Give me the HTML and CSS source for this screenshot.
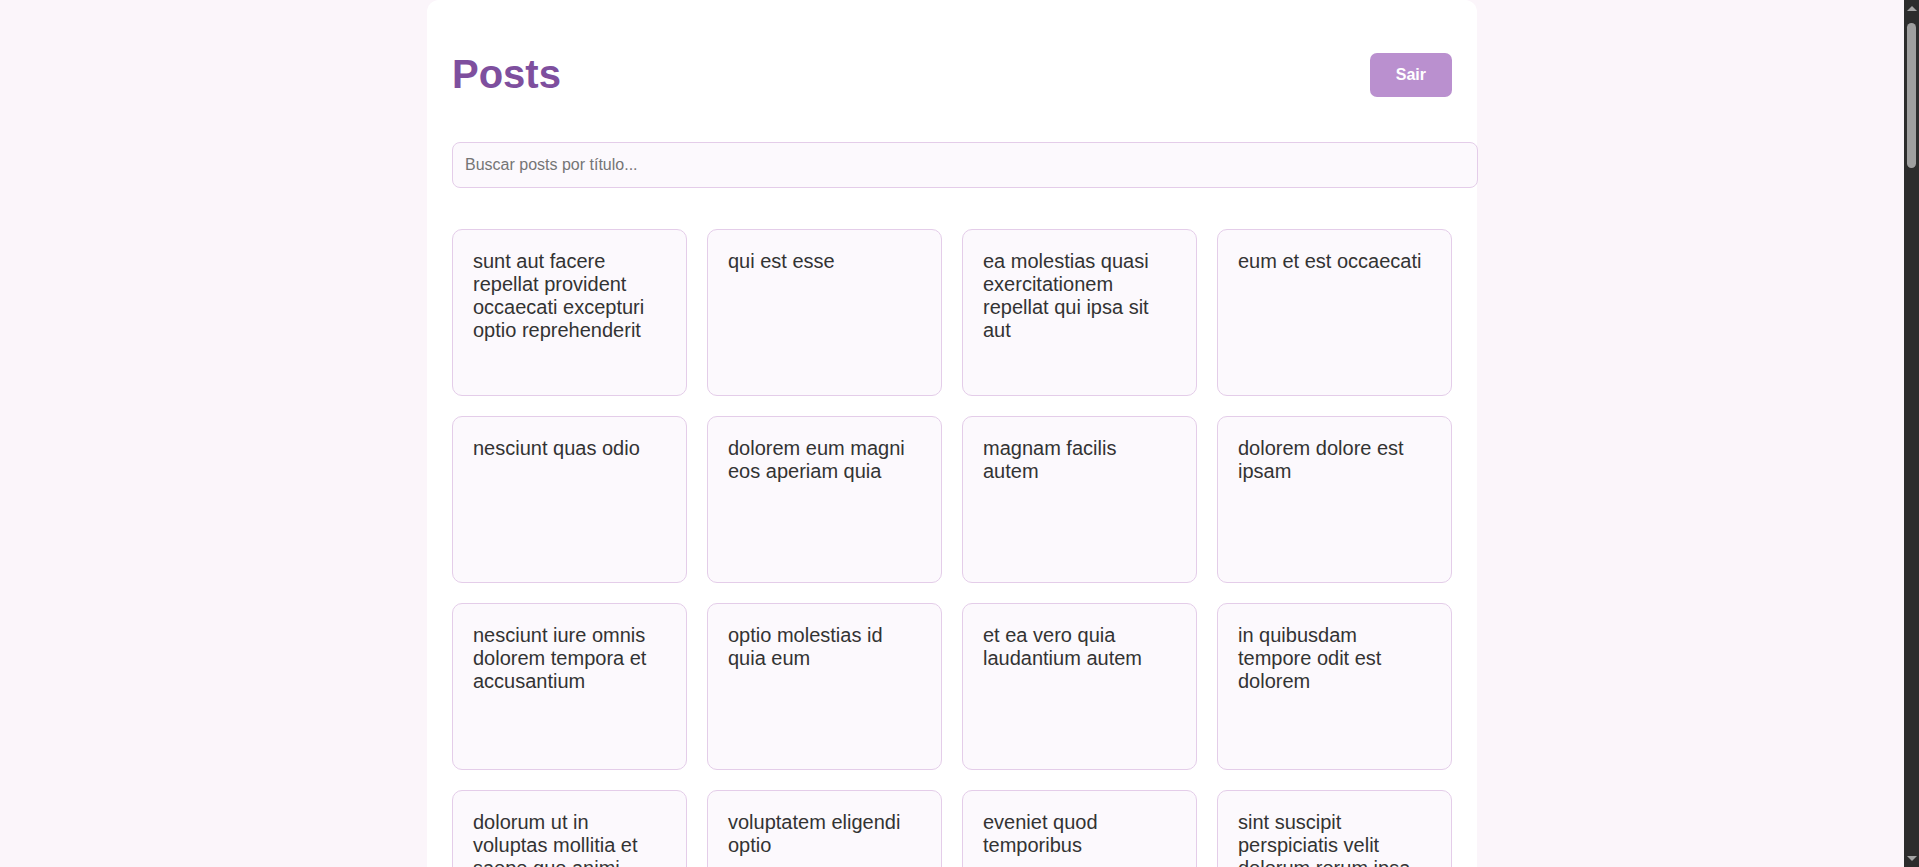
FILE: index.html
```html
<!DOCTYPE html>
<html lang="pt-BR">
<head>
<meta charset="utf-8">
<title>Posts</title>
<link rel="stylesheet" href="styles.css">
</head>
<body>
<main class="container">
  <header class="header">
    <h1 class="title">Posts</h1>
    <button class="logout" type="button">Sair</button>
  </header>
  <input class="search" type="text" placeholder="Buscar posts por título...">
  <section class="grid">
    <article class="card"><h3 class="card-title">sunt aut facere repellat provident occaecati excepturi optio reprehenderit</h3></article>
    <article class="card"><h3 class="card-title">qui est esse</h3></article>
    <article class="card"><h3 class="card-title">ea molestias quasi exercitationem repellat qui ipsa sit aut</h3></article>
    <article class="card"><h3 class="card-title">eum et est occaecati</h3></article>
    <article class="card"><h3 class="card-title">nesciunt quas odio</h3></article>
    <article class="card"><h3 class="card-title">dolorem eum magni eos aperiam quia</h3></article>
    <article class="card"><h3 class="card-title">magnam facilis autem</h3></article>
    <article class="card"><h3 class="card-title">dolorem dolore est ipsam</h3></article>
    <article class="card"><h3 class="card-title">nesciunt iure omnis dolorem tempora et accusantium</h3></article>
    <article class="card"><h3 class="card-title">optio molestias id quia eum</h3></article>
    <article class="card"><h3 class="card-title">et ea vero quia laudantium autem</h3></article>
    <article class="card"><h3 class="card-title">in quibusdam tempore odit est dolorem</h3></article>
    <article class="card"><h3 class="card-title">dolorum ut in voluptas mollitia et saepe quo animi</h3></article>
    <article class="card"><h3 class="card-title">voluptatem eligendi optio</h3></article>
    <article class="card"><h3 class="card-title">eveniet quod temporibus</h3></article>
    <article class="card"><h3 class="card-title">sint suscipit perspiciatis velit dolorum rerum ipsa laboriosam odio</h3></article>
    <article class="card"><h3 class="card-title">fugit voluptas sed molestias voluptatem provident</h3></article>
    <article class="card"><h3 class="card-title">voluptate et itaque vero tempora molestiae</h3></article>
    <article class="card"><h3 class="card-title">adipisci placeat illum aut reiciendis qui</h3></article>
    <article class="card"><h3 class="card-title">doloribus ad provident suscipit at</h3></article>
    <article class="card"><h3 class="card-title">asperiores ea ipsam voluptatibus modi minima quia sint</h3></article>
    <article class="card"><h3 class="card-title">dolor sint quo a velit explicabo quia nam</h3></article>
    <article class="card"><h3 class="card-title">maxime id vitae nihil numquam</h3></article>
    <article class="card"><h3 class="card-title">autem hic labore sunt dolores incidunt</h3></article>
    <article class="card"><h3 class="card-title">rem alias distinctio quo quis</h3></article>
    <article class="card"><h3 class="card-title">est et quae odit qui non</h3></article>
    <article class="card"><h3 class="card-title">quasi id et eos tenetur aut quo autem</h3></article>
    <article class="card"><h3 class="card-title">delectus ullam et corporis nulla voluptas sequi</h3></article>
    <article class="card"><h3 class="card-title">iusto eius quod necessitatibus culpa ea</h3></article>
    <article class="card"><h3 class="card-title">a quo magni similique perferendis</h3></article>
    <article class="card"><h3 class="card-title">ullam ut quidem id aut vel consequuntur</h3></article>
    <article class="card"><h3 class="card-title">doloremque illum aliquid sunt</h3></article>
    <article class="card"><h3 class="card-title">qui explicabo molestiae dolorem</h3></article>
    <article class="card"><h3 class="card-title">magnam ut rerum iure</h3></article>
    <article class="card"><h3 class="card-title">id nihil consequatur molestias animi provident</h3></article>
    <article class="card"><h3 class="card-title">fuga nam accusamus voluptas reiciendis itaque</h3></article>
    <article class="card"><h3 class="card-title">provident vel ut sit ratione est</h3></article>
    <article class="card"><h3 class="card-title">explicabo et eos deleniti nostrum ab id repellendus</h3></article>
    <article class="card"><h3 class="card-title">eos dolorem iste accusantium est eaque quam</h3></article>
    <article class="card"><h3 class="card-title">enim quo cumque</h3></article>
    <article class="card"><h3 class="card-title">non est facere</h3></article>
    <article class="card"><h3 class="card-title">commodi ullam sint et excepturi error explicabo praesentium voluptas</h3></article>
    <article class="card"><h3 class="card-title">eligendi iste nostrum consequuntur adipisci praesentium sit beatae perferendis</h3></article>
    <article class="card"><h3 class="card-title">optio dolor molestias sit</h3></article>
    <article class="card"><h3 class="card-title">ut numquam possimus omnis eius suscipit laudantium iure</h3></article>
    <article class="card"><h3 class="card-title">aut quo modi neque nostrum ducimus</h3></article>
    <article class="card"><h3 class="card-title">quibusdam cumque rem aut deserunt</h3></article>
    <article class="card"><h3 class="card-title">ut voluptatem illum ea doloribus itaque eos</h3></article>
    <article class="card"><h3 class="card-title">laborum non sunt aut ut assumenda perspiciatis voluptas</h3></article>
    <article class="card"><h3 class="card-title">repellendus qui recusandae incidunt voluptates tenetur qui omnis exercitationem</h3></article>
    <article class="card"><h3 class="card-title">soluta aliquam aperiam consequatur illo quis voluptas</h3></article>
    <article class="card"><h3 class="card-title">qui enim et consequuntur quia animi quis voluptate quibusdam</h3></article>
    <article class="card"><h3 class="card-title">ut quo aut ducimus alias</h3></article>
    <article class="card"><h3 class="card-title">sit asperiores ipsam eveniet odio non quia</h3></article>
    <article class="card"><h3 class="card-title">sit vel voluptatem et non libero</h3></article>
    <article class="card"><h3 class="card-title">qui et at rerum necessitatibus</h3></article>
    <article class="card"><h3 class="card-title">sed ab est est</h3></article>
    <article class="card"><h3 class="card-title">voluptatum itaque dolores nisi et quasi</h3></article>
    <article class="card"><h3 class="card-title">qui commodi dolor at maiores et quis id accusantium</h3></article>
    <article class="card"><h3 class="card-title">consequatur placeat omnis quisquam quia reprehenderit fugit veritatis facere</h3></article>
    <article class="card"><h3 class="card-title">voluptatem doloribus consectetur est ut ducimus</h3></article>
    <article class="card"><h3 class="card-title">beatae enim quia vel</h3></article>
    <article class="card"><h3 class="card-title">voluptas blanditiis repellendus animi ducimus error sapiente et suscipit</h3></article>
    <article class="card"><h3 class="card-title">et fugit quas eum in in aperiam quod</h3></article>
    <article class="card"><h3 class="card-title">consequatur id enim sunt et et</h3></article>
    <article class="card"><h3 class="card-title">repudiandae ea animi iusto</h3></article>
    <article class="card"><h3 class="card-title">aliquid eos sed fuga est maxime repellendus</h3></article>
    <article class="card"><h3 class="card-title">odio quis facere architecto reiciendis optio</h3></article>
    <article class="card"><h3 class="card-title">fugiat quod pariatur odit minima</h3></article>
    <article class="card"><h3 class="card-title">voluptatem laborum magni</h3></article>
    <article class="card"><h3 class="card-title">et iusto veniam et illum aut fuga</h3></article>
    <article class="card"><h3 class="card-title">sint hic doloribus consequatur eos non id</h3></article>
    <article class="card"><h3 class="card-title">consequuntur deleniti eos quia temporibus ab aliquid at</h3></article>
    <article class="card"><h3 class="card-title">enim unde ratione doloribus quas enim ut sit sapiente</h3></article>
    <article class="card"><h3 class="card-title">dignissimos eum dolor ut enim et delectus in</h3></article>
    <article class="card"><h3 class="card-title">doloremque officiis ad et non perferendis</h3></article>
    <article class="card"><h3 class="card-title">necessitatibus quasi exercitationem odio</h3></article>
    <article class="card"><h3 class="card-title">quam voluptatibus rerum veritatis</h3></article>
    <article class="card"><h3 class="card-title">pariatur consequatur quia magnam autem omnis non amet</h3></article>
    <article class="card"><h3 class="card-title">labore in ex et explicabo corporis aut quas</h3></article>
    <article class="card"><h3 class="card-title">tempora rem veritatis voluptas quo dolores vero</h3></article>
    <article class="card"><h3 class="card-title">laudantium voluptate suscipit sunt enim enim</h3></article>
    <article class="card"><h3 class="card-title">odit et voluptates doloribus alias odio et</h3></article>
    <article class="card"><h3 class="card-title">optio ipsam molestias necessitatibus occaecati facilis veritatis dolores aut</h3></article>
    <article class="card"><h3 class="card-title">dolore veritatis porro provident adipisci blanditiis et sunt</h3></article>
    <article class="card"><h3 class="card-title">placeat quia et porro iste</h3></article>
    <article class="card"><h3 class="card-title">nostrum quis quasi placeat</h3></article>
    <article class="card"><h3 class="card-title">sapiente omnis fugit eos</h3></article>
    <article class="card"><h3 class="card-title">sint soluta et vel magnam aut ut sed qui</h3></article>
    <article class="card"><h3 class="card-title">ad iusto omnis odit dolor voluptatibus</h3></article>
    <article class="card"><h3 class="card-title">aut amet sed</h3></article>
    <article class="card"><h3 class="card-title">ratione ex tenetur perferendis</h3></article>
    <article class="card"><h3 class="card-title">beatae soluta recusandae</h3></article>
    <article class="card"><h3 class="card-title">qui qui voluptates illo iste minima</h3></article>
    <article class="card"><h3 class="card-title">id minus libero illum nam ad officiis</h3></article>
    <article class="card"><h3 class="card-title">quaerat velit veniam amet cupiditate aut numquam ut sequi</h3></article>
    <article class="card"><h3 class="card-title">quas fugiat ut perspiciatis vero provident</h3></article>
    <article class="card"><h3 class="card-title">laboriosam dolor voluptates</h3></article>
    <article class="card"><h3 class="card-title">temporibus sit alias delectus eligendi possimus magni</h3></article>
    <article class="card"><h3 class="card-title">at nam consequatur ea labore ea harum</h3></article>
  </section>
</main>
<div class="scrollbar" aria-hidden="true">
  <span class="scroll-arrow scroll-arrow-up"></span>
  <span class="scroll-thumb"></span>
  <span class="scroll-arrow scroll-arrow-down"></span>
</div>
</body>
</html>
```
FILE: styles.css
```css
html {
  background: #fbf5fa;
}

body {
  margin: 0;
  padding-right: 15px;
  background: #fbf5fa;
  color: #333333;
  font-family: "Liberation Sans", Arial, sans-serif;
}

.container {
  width: 1000px;
  margin: 0 auto 20px;
  padding: 25px;
  background: #ffffff;
  border-radius: 12px;
}

.header {
  display: flex;
  align-items: center;
  justify-content: space-between;
  margin-bottom: 18px;
}

.title {
  margin: 27px 0;
  font-size: 40px;
  font-weight: bold;
  color: #7e4f9e;
  line-height: normal;
}

.logout {
  padding: 13px 26px;
  border: none;
  border-radius: 7px;
  background: #ba90cf;
  color: #ffffff;
  font-family: "Liberation Sans", Arial, sans-serif;
  font-size: 16px;
  font-weight: bold;
  line-height: normal;
  cursor: pointer;
}

.search {
  display: block;
  width: 100%;
  margin: 0 0 41px;
  padding: 13px 12px;
  border: 1px solid #e4cde9;
  border-radius: 8px;
  background: #fcf9fd;
  color: #333333;
  font-family: "Liberation Sans", Arial, sans-serif;
  font-size: 16px;
  line-height: normal;
  outline: none;
}

.search::placeholder {
  color: #757575;
}

.grid {
  display: grid;
  grid-template-columns: repeat(4, 1fr);
  gap: 20px;
}

.card {
  box-sizing: border-box;
  height: 167px;
  padding: 20px;
  border: 1px solid #e4cde9;
  border-radius: 10px;
  background: #fcf9fd;
  overflow: hidden;
}

.card-title {
  margin: 0;
  font-size: 20px;
  font-weight: normal;
  line-height: normal;
  color: #333333;
}

/* imitation of the browser's dark scrollbar shown in the screenshot */
.scrollbar {
  position: fixed;
  top: 0;
  right: 0;
  width: 15px;
  height: 100vh;
  background: #2c2c2c;
  display: flex;
  flex-direction: column;
  align-items: center;
}

.scroll-arrow {
  width: 0;
  height: 0;
  border-left: 5px solid transparent;
  border-right: 5px solid transparent;
}

.scroll-arrow-up {
  margin-top: 6px;
  border-bottom: 5px solid #a3a3a3;
}

.scroll-arrow-down {
  margin-top: auto;
  margin-bottom: 6px;
  border-top: 5px solid #a3a3a3;
}

.scroll-thumb {
  width: 9px;
  height: 145px;
  margin-top: 12px;
  border-radius: 5px;
  background: #9f9f9f;
}
```
